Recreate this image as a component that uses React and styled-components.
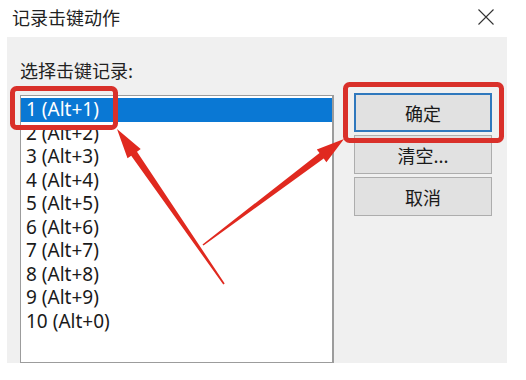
import React from "react";
import styled, { createGlobalStyle } from "styled-components";

const Global = createGlobalStyle`
  html, body { margin: 0; padding: 0; background: #ffffff; }
  body {
    width: 526px; height: 380px; overflow: hidden;
    font-family: "Noto Sans", "Noto Sans CJK SC", sans-serif;
    color: #1a1a1a;
  }
`;

const Window = styled.div`
  position: relative;
  width: 526px;
  height: 380px;
  background: #ffffff;
`;

const TitleBar = styled.div`
  height: 37px;
  display: flex;
  align-items: center;
  justify-content: space-between;
  padding: 0 32px 0 12px;
  box-sizing: border-box;
`;

const Title = styled.div`
  font-family: "Noto Sans CJK SC", sans-serif;
  font-size: 18px;
  line-height: 24px;
  color: #222;
  margin-top: -4px;
`;

const Body = styled.div`
  margin: 0 19px 0 7px;
  height: 326px;
  background: #f0f0f0;
  display: flex;
  padding-left: 13px;
  box-sizing: border-box;
  overflow: hidden;
`;

const LeftCol = styled.div`
  display: flex;
  flex-direction: column;
  padding-top: 21px;
`;

const Label = styled.div`
  font-family: "Noto Sans CJK SC", sans-serif;
  font-size: 18px;
  line-height: 24px;
  height: 24px;
  color: #222;
`;

const ListBox = styled.div`
  margin-top: 13px;
  width: 314px;
  height: 290px;
  box-sizing: border-box;
  border: 1px solid #9c9c9c;
  border-right-width: 2px;
  background: #ffffff;
  padding: 2px 0 0 0;
`;

const Row = styled.div`
  height: 23.5px;
  line-height: 23.5px;
  padding-left: 5px;
  font-family: "Noto Sans", sans-serif;
  font-size: 19px;
  white-space: nowrap;
  color: ${(p) => (p.$selected ? "#ffffff" : "#1a1a1a")};
  background: ${(p) => (p.$selected ? "#0a78d4" : "transparent")};
`;

const ButtonCol = styled.div`
  display: flex;
  flex-direction: column;
  gap: 3px;
  margin-left: 20px;
  padding-top: 56px;
`;

const Button = styled.div`
  width: 138px;
  height: 39px;
  box-sizing: border-box;
  display: flex;
  align-items: center;
  justify-content: center;
  background: #e1e1e1;
  border: ${(p) => (p.$default ? "2px solid #2f78bd" : "1px solid #adadad")};
  font-family: "Noto Sans CJK SC", sans-serif;
  font-size: 18px;
  color: #1a1a1a;
`;

const Overlay = styled.svg`
  position: absolute;
  left: 0;
  top: 0;
  pointer-events: none;
`;

const CloseIcon = () => (
  <svg width="16" height="16" viewBox="0 0 16 16" style={{ marginTop: "-3px" }}>
    <path d="M0.5 0.5 L15.5 15.5 M15.5 0.5 L0.5 15.5" stroke="#333" strokeWidth="1.1" fill="none" />
  </svg>
);

const items = [
  "1 (Alt+1)", "2 (Alt+2)", "3 (Alt+3)", "4 (Alt+4)", "5 (Alt+5)",
  "6 (Alt+6)", "7 (Alt+7)", "8 (Alt+8)", "9 (Alt+9)", "10 (Alt+0)",
];

export default function App() {
  return (
    <Window>
      <Global />
      <TitleBar>
        <Title>记录击键动作</Title>
        <CloseIcon />
      </TitleBar>
      <Body>
        <LeftCol>
          <Label>选择击键记录:</Label>
          <ListBox>
            {items.map((t, i) => (
              <Row key={t} $selected={i === 0}>{t}</Row>
            ))}
          </ListBox>
        </LeftCol>
        <ButtonCol>
          <Button $default>确定</Button>
          <Button>清空...</Button>
          <Button>取消</Button>
        </ButtonCol>
      </Body>
      <Overlay width="526" height="380" viewBox="0 0 526 380">
        <rect x="12.5" y="88.5" width="103" height="39" rx="4" fill="none" stroke="#d9302a" strokeWidth="5" />
        <rect x="345.5" y="84.5" width="156" height="56" rx="4" fill="none" stroke="#d9302a" strokeWidth="5" />
        <polygon
          points="117,129 140.7,149.1 137,151.7 224.7,283.5 223.3,284.5 131.2,155.7 127.5,158.3"
          fill="#e0291f"
        />
        <polygon
          points="344,139 326.4,162.2 323.7,158.6 203.5,245.6 202.5,244.4 319.5,153 316.8,149.4"
          fill="#e0291f"
        />
      </Overlay>
    </Window>
  );
}
